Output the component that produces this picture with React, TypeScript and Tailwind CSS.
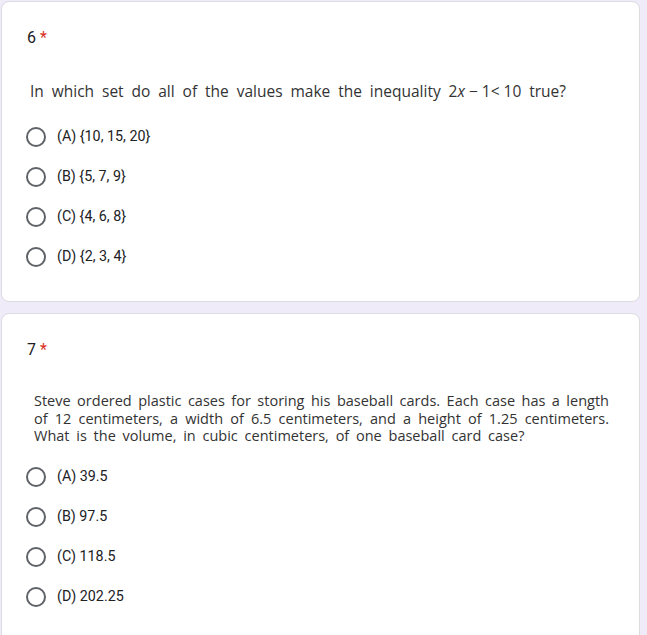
import React from "react";

function Radio({ label }: { label: string }) {
  return (
    <div className="flex h-[40px] items-center">
      <div className="ml-[24px] h-[20px] w-[20px] rounded-full border-2 border-[#5f6368]" />
      <span className="ml-[11px] text-[14.3px] text-[#202124]" style={{ fontFamily: "Roboto, sans-serif" }}>
        {label}
      </span>
    </div>
  );
}

const qFont = { fontFamily: '"Open Sans", sans-serif' };

export default function App() {
  return (
    <div className="min-h-[635px] w-[647px] bg-[#f0ebf8] pt-[1px] pl-[1px]" style={{ fontFamily: "Roboto, sans-serif" }}>
      <div className="flex w-[639px] flex-col rounded-[8px] border border-[#dadce0] bg-white pb-[24px]">
        <div className="pl-[25px] pt-[24px] text-[16px] leading-[24px] text-[#202124]">
          6 <span className="text-[#d93025]">*</span>
        </div>
        <div
          className="mt-[31px] mb-[16px] ml-[28px] w-[536px] text-justify text-[15.5px] leading-[20px] text-[#333] [text-align-last:justify]"
          style={qFont}
        >
          In which set do all of the values make the inequality{" "}
          <span className="inline-block">
            2<i>x</i> − 1&lt; 10
          </span>{" "}
          true?
        </div>
        <Radio label="(A) {10, 15, 20}" />
        <Radio label="(B) {5, 7, 9}" />
        <Radio label="(C) {4, 6, 8}" />
        <Radio label="(D) {2, 3, 4}" />
      </div>
      <div className="mt-[11px] flex w-[639px] flex-col rounded-[8px] border border-[#dadce0] bg-white pb-[24px]">
        <div className="pl-[25px] pt-[24px] text-[16px] leading-[24px] text-[#202124]">
          7 <span className="text-[#d93025]">*</span>
        </div>
        <div className="mt-[30px] mb-[12px] ml-[32px] w-[575px] text-[14.5px] leading-[17.5px] text-[#333]" style={qFont}>
          <div className="text-justify [text-align-last:justify]">
            Steve ordered plastic cases for storing his baseball cards. Each case has a length
          </div>
          <div className="text-justify [text-align-last:justify]">
            of 12 centimeters, a width of 6.5 centimeters, and a height of 1.25 centimeters.
          </div>
          <div className="[word-spacing:3px]">What is the volume, in cubic centimeters, of one baseball card case?</div>
        </div>
        <Radio label="(A) 39.5" />
        <Radio label="(B) 97.5" />
        <Radio label="(C) 118.5" />
        <Radio label="(D) 202.25" />
      </div>
    </div>
  );
}
